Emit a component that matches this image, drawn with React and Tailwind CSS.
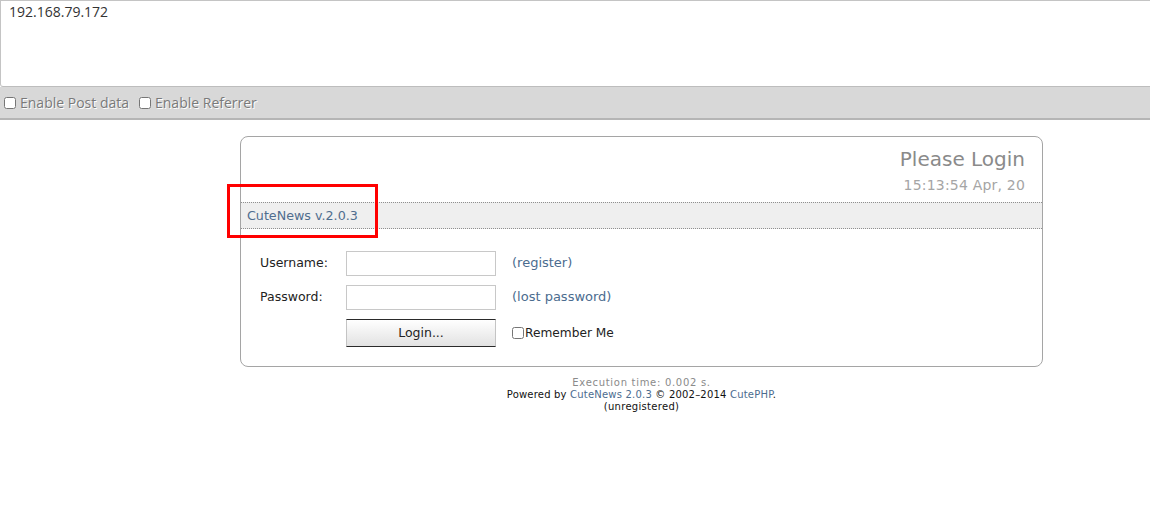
import { useState } from 'react';

const verdana = "font-['DejaVu_Sans',Verdana,sans-serif]";

function LoginRow({ label, type, link }) {
  return (
    <div className="flex h-[34px] items-center">
      <label className="w-[105px] shrink-0 pl-[19px] text-[12.5px] text-[#222]">{label}</label>
      <input
        type={type}
        className="h-[25px] w-[150px] shrink-0 border border-[#c8c8c8] bg-white px-1 text-[12px] outline-none"
      />
      <a href="#" className="ml-[16px] text-[13px] text-[#4b6c8f]">
        {link}
      </a>
    </div>
  );
}

export default function App() {
  const [remember, setRemember] = useState(false);

  return (
    <div className={`min-h-screen bg-white ${verdana}`}>
      <div className="h-[87px] rounded-bl-[3px] border border-r-0 border-[#c4c4c4] border-b-[#bdbdbd] bg-white px-[8px] pt-0 font-['Open_Sans',sans-serif] text-[14px] text-[#333]">
        192.168.79.172
      </div>

      <div className="flex h-[33px] items-center gap-[10px] border-b-2 border-[#b5b5b5] bg-[#d8d8d8] pl-[4px] font-['Open_Sans',sans-serif] text-[14px] text-[#7a7a7a] [text-shadow:1px_1px_0_#fff]">
        <label className="flex items-center gap-[4px]">
          <input type="checkbox" className="h-[12px] w-[12px]" />
          Enable Post data
        </label>
        <label className="flex items-center gap-[4px]">
          <input type="checkbox" className="h-[12px] w-[12px]" />
          Enable Referrer
        </label>
      </div>

      <div className="ml-[240px] mt-[16px] w-[803px]">
        <div className="relative h-[231px] rounded-[8px] border border-[#a5a5a5] bg-white">
          <div className="flex flex-col items-end pr-[17px] pt-[9px]">
            <h1 className="text-[20px] leading-[26px] text-[#8a8a8a]">Please Login</h1>
            <div className="mt-[4px] text-[14px] leading-[18px] tracking-[0.2px] text-[#a5a5a5]">15:13:54 Apr, 20</div>
          </div>

          <div className="mt-[8px] flex h-[27px] items-center border-y border-dotted border-[#8f8f8f] bg-[#efefef] pl-[6px] text-[12.7px] text-[#4f6d8e]">
            CuteNews v.2.0.3
          </div>

          <div className="pt-[17px]">
            <LoginRow label="Username:" type="text" link="(register)" />
            <LoginRow label="Password:" type="password" link="(lost password)" />
            <div className="mt-[2px] flex h-[34px] items-center pl-[105px]">
              <button
                type="button"
                className="h-[28px] w-[150px] shrink-0 border border-x-[#c4c4c4] border-y-[#2a2a2a] bg-gradient-to-b from-white to-[#e2e2e2] text-[12.5px] text-[#222]"
              >
                Login...
              </button>
              <label className="ml-[16px] flex items-center text-[12.2px] text-[#222]">
                <input
                  type="checkbox"
                  checked={remember}
                  onChange={() => setRemember(!remember)}
                  className="mr-[1px] h-[12px] w-[12px]"
                />
                Remember Me
              </label>
            </div>
          </div>

          <div className="absolute left-[-14px] top-[47px] h-[54px] w-[151px] border-[3px] border-[#ff0000]" />
        </div>

        <div className="mt-[10px] text-center text-[10px] leading-[12px]">
          <div className="tracking-[0.7px] text-[#8a8a8a]">Execution time: 0.002 s.</div>
          <div className="tracking-[0.2px] text-[#111]">
            Powered by <a href="#" className="text-[#4b6c8f]">CuteNews 2.0.3</a> © 2002–2014{' '}
            <a href="#" className="text-[#4b6c8f]">CutePHP</a>.
          </div>
          <div className="tracking-[0.3px] text-[#111]">(unregistered)</div>
        </div>
      </div>
    </div>
  );
}
